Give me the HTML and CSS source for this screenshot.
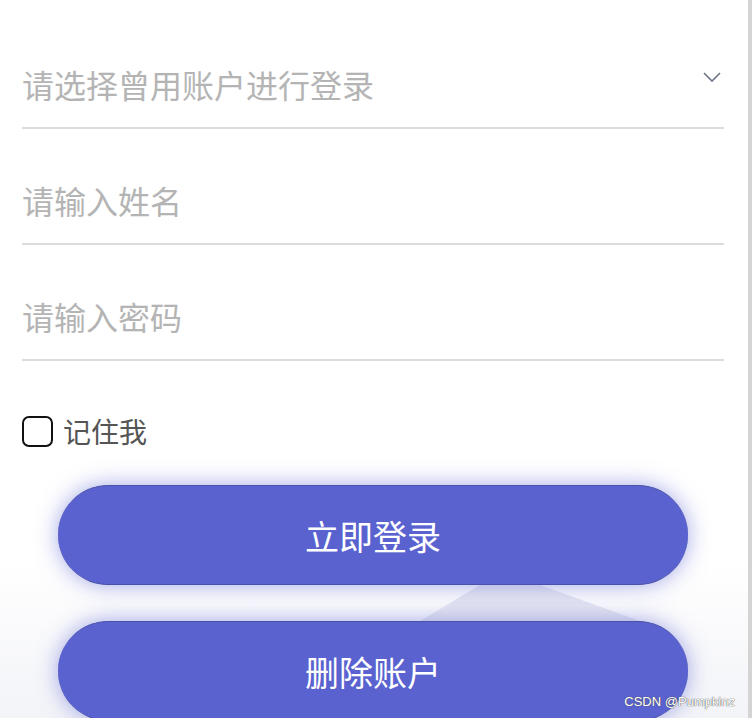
FILE: index.html
```html
<!DOCTYPE html>
<html lang="zh-CN">
<head>
<meta charset="utf-8">
<title>登录</title>
<link rel="stylesheet" href="styles.css">
</head>
<body>
<div class="page">
  <form class="form">
    <div class="field select">
      <span class="placeholder">请选择曾用账户进行登录</span>
      <svg class="chevron" width="20" height="12" viewBox="0 0 20 12"><path d="M2 2 L10 10 L18 2" fill="none" stroke="#6d7588" stroke-width="1.6"/></svg>
    </div>
    <div class="field">
      <span class="placeholder">请输入姓名</span>
    </div>
    <div class="field">
      <span class="placeholder">请输入密码</span>
    </div>
    <label class="remember">
      <span class="box"></span>
      <span class="remember-text">记住我</span>
    </label>
    <div class="actions">
      <svg class="deco" width="240" height="40" viewBox="0 0 240 40"><polygon points="0,36 60,0 120,0 220,36" fill="#c9cde3" opacity="0.45"/></svg>
      <button type="button" class="btn">立即登录</button>
      <button type="button" class="btn">删除账户</button>
    </div>
  </form>
  <div class="watermark">CSDN @Pumpkinz</div>
</div>
</body>
</html>
```
FILE: styles.css
```css
html, body {
  margin: 0;
  padding: 0;
  height: 100%;
  overflow: hidden;
}
body {
  font-family: "Noto Sans CJK SC", "Liberation Sans", sans-serif;
  background: #ffffff;
}
.page {
  position: relative;
  width: 748px;
  height: 718px;
  border-right: 4px solid #d4d4d4;
  background: linear-gradient(to bottom, #ffffff 0%, #ffffff 78%, #f3f4f8 100%);
  overflow: hidden;
}
.form {
  display: flex;
  flex-direction: column;
  width: 702px;
  padding: 13px 0 0 22px;
}
.field {
  position: relative;
  height: 116px;
  padding-top: 51px;
  box-sizing: border-box;
  border-bottom: 2px solid #dcdcdc;
}
.placeholder {
  display: block;
  font-size: 32px;
  line-height: 40px;
  color: #b4b4b4;
}
.chevron {
  position: absolute;
  right: 2px;
  top: 58px;
}
.remember {
  display: flex;
  align-items: center;
  gap: 10px;
  margin-top: 54px;
  height: 32px;
}
.box {
  width: 27px;
  height: 27px;
  border: 2px solid #111;
  border-radius: 7px;
}
.remember-text {
  font-size: 28px;
  line-height: 32px;
  color: #555555;
}
.actions {
  position: relative;
  display: flex;
  flex-direction: column;
  gap: 36px;
  margin-top: 38px;
  padding-left: 36px;
}
.deco {
  position: absolute;
  left: 398px;
  top: 100px;
}
.btn {
  position: relative;
  width: 630px;
  height: 100px;
  border: none;
  border-top: 1px solid #4a51a8;
  border-bottom: 1px solid #4a51a8;
  border-radius: 50px;
  background: #5962cf;
  color: #ffffff;
  font-family: "Noto Sans CJK SC", sans-serif;
  font-size: 34px;
  box-shadow: 0 0 22px rgba(88, 96, 210, 0.55);
  padding: 0;
}
.watermark {
  position: absolute;
  right: 13px;
  bottom: 9px;
  font-family: "Liberation Sans", Arial, sans-serif;
  font-size: 13px;
  color: #ffffff;
  text-shadow: 0 0 1px #555, 0 0 1px #555;
}
```
